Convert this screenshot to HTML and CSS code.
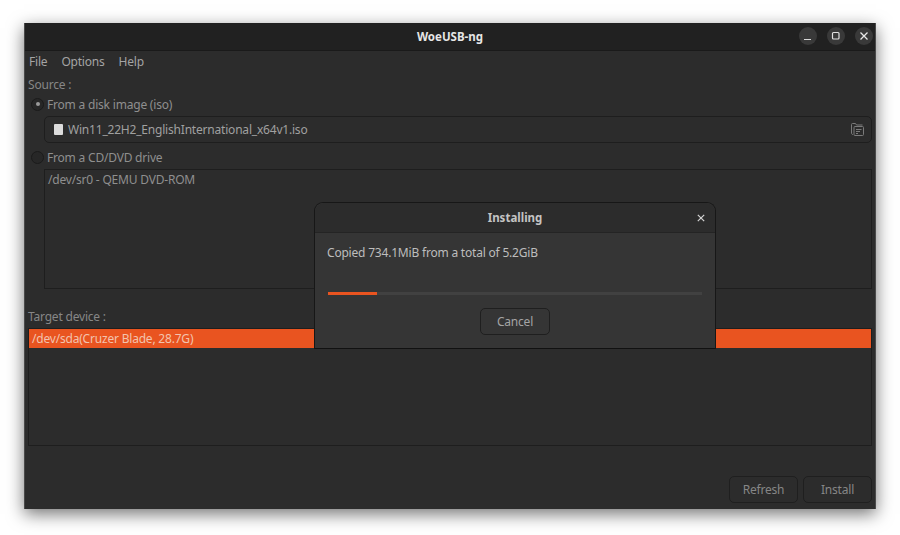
FILE: index.html
```html
<!DOCTYPE html>
<html lang="en">
<head>
<meta charset="utf-8">
<title>WoeUSB-ng</title>
<link rel="stylesheet" href="styles.css">
</head>
<body>
<div class="window">
  <header class="titlebar">
    <span class="title">WoeUSB-ng</span>
    <div class="controls">
      <span class="ctl"><svg width="24" height="24" viewBox="0 0 24 24"><path d="M8 15.5h7" stroke="#d8d8d8" stroke-width="1.2" fill="none"/></svg></span>
      <span class="ctl"><svg width="24" height="24" viewBox="0 0 24 24"><rect x="8.5" y="8.5" width="6.5" height="6.5" rx="1" stroke="#e0e0e0" stroke-width="1.2" fill="none"/></svg></span>
      <span class="ctl"><svg width="24" height="24" viewBox="0 0 24 24"><path d="M8.5 8.5l7 7M15.5 8.500l-7 7" stroke="#e8e8e8" stroke-width="1.3" fill="none"/></svg></span>
    </div>
  </header>
  <nav class="menubar"><span>File</span><span>Options</span><span>Help</span></nav>
  <main class="content">
    <div class="label">Source :</div>
    <div class="radio-row"><span class="radio checked"></span>From a disk image (iso)</div>
    <div class="chooser">
      <span class="file-icon"></span>
      <span class="file-name">Win11_22H2_EnglishInternational_x64v1.iso</span>
      <svg class="open-icon" width="15" height="15" viewBox="0 0 15 15" fill="none" stroke="#7b7b7b" stroke-width="1"><path d="M1.500 11V2.500a1 1 0 0 1 1-1h3l1 1.500h6"/><path d="M1.500 11c0 1 .5 1.500 1.500 1.500"/><rect x="4" y="4.500" width="9.500" height="9" rx="1"/><path d="M6 7.500h5.500M6 9.500h4M6 11.500h2"/></svg>
    </div>
    <div class="radio-row second"><span class="radio"></span>From a CD/DVD drive</div>
    <div class="drive-list">/dev/sr0 - QEMU DVD-ROM</div>
    <div class="label target">Target device :</div>
    <div class="target-list"><div class="selected">/dev/sda(Cruzer Blade, 28.7G)</div></div>
    <div class="actions"><button class="btn">Refresh</button><button class="btn">Install</button></div>
  </main>
  <section class="dialog">
    <header class="dialog-head"><span class="dialog-title">Installing</span>
      <svg class="dialog-close" width="10" height="10" viewBox="0 0 10 10"><path d="M1.800 1.800l6.400 6.400M8.200 1.800l-6.400 6.400" stroke="#d4d4d4" stroke-width="1.200" fill="none"/></svg>
    </header>
    <div class="dialog-body">
      <p class="dialog-text">Copied 734.1MiB from a total of 5.2GiB</p>
      <div class="progress"><div class="progress-fill" style="width:13.200%"></div></div>
      <button class="btn cancel">Cancel</button>
    </div>
  </section>
</div>
</body>
</html>
```
FILE: styles.css
```css
* { box-sizing: border-box; }
html, body { margin: 0; height: 100%; background: #fff; overflow: hidden; }
body { padding: 23px 24px 0; font-family: "Noto Sans", "Open Sans", sans-serif; font-size: 12px; letter-spacing: -0.2px; color: #8f8f8f; }

.window {
  position: relative;
  width: 852px;
  height: 486px;
  background: #2c2c2c;
  border-left: 1px solid #4a4a4a;
  border-right: 1px solid #4a4a4a;
  box-shadow: 0 5px 16px rgba(0, 0, 0, .55);
  display: flex;
  flex-direction: column;
}

.titlebar {
  height: 28px;
  flex: none;
  background: #212121;
  border-bottom: 1px solid #1a1a1a;
  display: flex;
  align-items: center;
  justify-content: center;
  position: relative;
}
.title { color: #e6e6e6; font-weight: 700; font-size: 11.500px; letter-spacing: 0; }
.controls { position: absolute; right: 2px; top: 3px; display: flex; gap: 10px; }
.ctl { width: 18px; height: 18px; margin-top: 1px; border-radius: 50%; background: #393939; display: block; overflow: hidden; }
.ctl svg { display: block; margin: -3px; }

.menubar { height: 21px; flex: none; display: flex; gap: 14px; align-items: center; padding: 0 4px; color: #a4a4a4; }

.content { flex: 1; display: flex; flex-direction: column; padding: 0 3px 6px 3px; min-height: 0; }
.label { height: 16px; line-height: 16px; margin-top: 5px; color: #878787; }
.radio-row { display: flex; align-items: center; height: 18px; margin-top: 2px; color: #8f8f8f; padding-left: 3px; gap: 3px; }
.radio { width: 13px; height: 13px; border-radius: 50%; background: #272727; border: 1px solid #1b1b1b; position: relative; }
.radio.checked::after { content: ""; position: absolute; left: 3.500px; top: 3.500px; width: 4px; height: 4px; border-radius: 50%; background: #9a9a9a; }

.chooser { margin: 3px 0 0 16px; height: 27px; display: flex; align-items: center; border: 1px solid #1e1e1e; border-radius: 5px; padding: 0 6px 0 9px; }
.file-icon { width: 9px; height: 11px; background: #dcdcdc; border-radius: 1px; margin-right: 5px; }
.file-name { flex: 1; color: #a0a0a0; }
.second { margin-top: 5px; }
.drive-list { margin: 3px 0 0 16px; height: 120px; border: 1px solid #1e1e1e; padding: 1px 3px; color: #8f8f8f; }
.target { margin-top: 20px; }
.target-list { margin-top: 3px; height: 118px; border: 1px solid #1e1e1e; }
.selected { height: 19px; line-height: 19px; background: #e95420; color: #f3c3ae; padding-left: 3px; }

.actions { margin-top: auto; display: flex; justify-content: flex-end; gap: 5px; }
.btn { width: 69px; height: 27px; background: #2c2c2c; border: 1px solid #1f1f1f; border-radius: 5px; color: #868686; font: inherit; letter-spacing: inherit; padding: 0; }

.dialog { position: absolute; left: 289px; top: 179px; width: 402px; height: 147px; background: #353535; border: 1px solid #171717; border-bottom-color: #111; border-radius: 9px 9px 0 0; display: flex; flex-direction: column; }
.dialog-head { height: 30px; flex: none; background: #2c2c2c; border-radius: 9px 9px 0 0; border-bottom: 1px solid #242424; display: flex; align-items: center; justify-content: center; position: relative; }
.dialog-title { color: #c4c4c4; font-weight: 700; font-size: 11.500px; letter-spacing: 0; }
.dialog-close { position: absolute; right: 9px; top: 10px; }
.dialog-body { flex: 1; display: flex; flex-direction: column; padding: 0 13px; }
.dialog-text { margin: 12px 0 0 -1px; color: #bdbdbd; line-height: 16px; }
.progress { margin-top: 31px; height: 3px; background: #414141; }
.progress-fill { height: 100%; background: #e95420; }
.cancel { align-self: center; width: 70px; margin-top: 13px; color: #a4a4a4; background: #353535; border-color: #1f1f1f; }
```
